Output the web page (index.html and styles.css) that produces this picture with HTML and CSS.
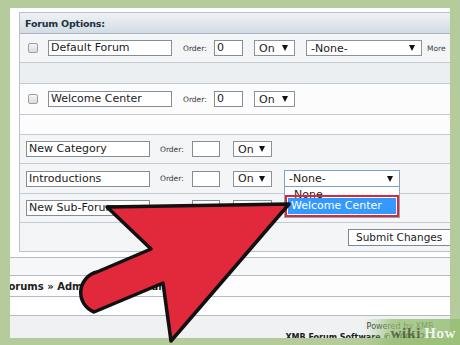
FILE: index.html
```html
<!DOCTYPE html>
<html>
<head>
<meta charset="utf-8">
<link rel="stylesheet" href="styles.css">
</head>
<body>
<div class="page">
  <div class="panel">
    <div class="tbl">
      <div class="hdr">Forum Options:</div>
      <div class="row r1 alt">
        <span class="cb"></span>
        <span class="inp name">Default Forum</span>
        <span class="lbl">Order:</span>
        <span class="inp ord">0</span>
        <span class="sel on">On<i class="tri"></i></span>
        <span class="sel none">-None-<i class="tri"></i></span>
        <span class="more">More</span>
      </div>
      <div class="row r2 grey"></div>
      <div class="row r3">
        <span class="cb"></span>
        <span class="inp name">Welcome Center</span>
        <span class="lbl">Order:</span>
        <span class="inp ord">0</span>
        <span class="sel on">On<i class="tri"></i></span>
      </div>
      <div class="row r4"></div>
      <div class="row r5 alt new">
        <span class="inp name">New Category</span>
        <span class="lbl">Order:</span>
        <span class="inp ord"></span>
        <span class="sel on">On<i class="tri"></i></span>
      </div>
      <div class="row r6 alt new">
        <span class="inp name">Introductions</span>
        <span class="lbl">Order:</span>
        <span class="inp ord"></span>
        <span class="sel on">On<i class="tri"></i></span>
        <span class="dropwrap">
          <span class="sel none focus">-None-<i class="tri"></i></span>
          <span class="droplist">
            <span class="opt">-None-</span>
            <span class="opt hi">Welcome Center</span>
          </span>
        </span>
      </div>
      <div class="row r7 alt new">
        <span class="inp name">New Sub-Forum</span>
        <span class="lbl">Order:</span>
        <span class="inp ord"></span>
        <span class="sel on">On<i class="tri"></i></span>
      </div>
      <div class="row r8 alt">
        <span class="btn">Submit Changes</span>
      </div>
    </div>
    <div class="band b1"></div>
    <div class="band nav"><span class="navtext">Forums » Administration Panel</span></div>
    <div class="band b3"></div>
    <div class="footer">
      <span class="pw">Powered by XMB</span>
      <span class="sw">XMB Forum Software © 2001-2011 The XMB Group</span>
    </div>
  </div>
  <div class="wm"><span class="wiki">wiki</span><span class="how">How</span></div>
  <svg class="arrow" width="460" height="345" viewBox="0 0 460 345">
    <path d="M289 204 L171 341 L163 283 L94 312 A21 21 0 0 1 97 272 L151 249 L107 207 Z" fill="#e2283b" stroke="#111" stroke-width="3.5" stroke-linejoin="round"/>
  </svg>
</div>
</body>
</html>
```
FILE: styles.css
```css
* { box-sizing: border-box; }
html, body { margin: 0; padding: 0; }
body { background: #b6cb9c; font-family: "DejaVu Sans", Verdana, sans-serif; color: #1a1a1a; }
.page { position: relative; width: 460px; height: 345px; overflow: hidden; padding: 8px 10px 0; }
.panel { width: 440px; height: 330px; background: #fff; overflow: hidden; }
.tbl { margin: 4px 0 0 9px; width: 440px; border: 1px solid #b9c1ca; border-right: none; }
.hdr { height: 21px; border-bottom: 1px solid #a9b4bf; background: linear-gradient(#eef2f5, #d3dce4); font-weight: bold; font-size: 9.5px; color: #23303d; padding-left: 5px; display: flex; align-items: center; letter-spacing: -0.2px; }
.row { display: flex; align-items: center; border-bottom: 1px solid #c3cad2; background: #fcfcfd; padding-left: 8px; }
.row.alt { background: #f3f5f7; }
.row.grey { background: #eceff2; }
.r1 { height: 29px; }
.r2 { height: 21px; }
.r3 { height: 31px; }
.r4 { height: 20px; }
.r5 { height: 29px; }
.r6 { height: 30px; }
.r7 { height: 29px; }
.r8 { height: 28px; border-bottom: none; justify-content: flex-end; }
.cb { width: 10px; height: 10px; border: 1px solid #9aa0a6; border-radius: 2px; background: linear-gradient(#f4f4f4, #dcdcdc); margin-right: 10px; }
.inp { height: 16px; border: 1px solid #858d95; background: #fff; font-size: 11px; line-height: 14px; padding-left: 2px; white-space: nowrap; overflow: hidden; }
.inp.name { width: 124px; }
.inp.ord { width: 29px; }
.lbl { font-size: 7.5px; color: #333; margin-left: 11px; width: 31px; }
.sel { height: 16px; border: 1px solid #8a929a; background: #fff; font-size: 11px; display: flex; align-items: center; justify-content: space-between; padding: 0 6px 0 4px; margin-left: 11px; }
.sel.on { width: 41px; }
.sel.none { width: 116px; }
.tri { width: 0; height: 0; border-left: 3px solid transparent; border-right: 3px solid transparent; border-top: 6px solid #111; }
.more { font-size: 7.5px; color: #444; margin-left: 5px; }
.new { padding-left: 6px; }
.new .lbl { margin-left: 10px; width: 32px; }
.new .inp.ord { width: 28px; }
.new .sel.on { margin-left: 13px; width: 39px; }
.dropwrap { position: relative; margin-left: 12px; }
.dropwrap .sel.none { margin-left: 0; height: 17px; border-color: #7b9fcf; }
.droplist { position: absolute; left: 0; top: 17px; width: 116px; background: #fff; border: 1px solid #8ea4bf; border-top: none; display: flex; flex-direction: column; padding: 0 2px 3px; }
.opt { font-size: 11px; white-space: nowrap; padding-left: 3px; }
.opt:first-child { height: 11px; line-height: 15px; color: #222; }
.opt.hi { position: relative; height: 16px; line-height: 16px; background: #3399ff; color: #fff; margin: 0 1px; outline: 2px solid #d42a3c; outline-offset: 1px; }
.btn { height: 17px; border: 1px solid #80878f; background: #fff; font-size: 10.5px; padding: 0 7px; display: flex; align-items: center; white-space: nowrap; width: 104px; margin-right: 7px; }
.band { border-top: 1px solid #b3bac2; }
.b1 { margin-top: 5px; height: 18px; background: #f6f7f8; }
.nav { height: 21px; background: #fdfdfd; display: flex; align-items: center; }
.navtext { font-weight: bold; font-size: 10px; color: #1e1e1e; margin-left: -8px; white-space: nowrap; }
.b3 { height: 19px; background: #fff; }
.footer { border-top: 1px solid #b3bac2; height: 30px; background: #eff1f3; display: flex; flex-direction: column; align-items: center; padding-left: 340px; padding-top: 5px; }
.pw { font-size: 8px; color: #333; white-space: nowrap; line-height: 11px; }
.sw { font-size: 8px; color: #222; font-weight: bold; white-space: nowrap; line-height: 11px; }
.wm { position: absolute; right: 0; bottom: 0; width: 96px; height: 26px; background: linear-gradient(90deg, rgba(150,190,115,0) 0%, rgba(150,190,115,0.75) 30%, rgba(150,190,115,0.85) 100%); display: flex; align-items: flex-end; justify-content: flex-end; padding: 0 4px 4px 0; font-family: "Liberation Serif", serif; font-weight: bold; font-size: 15px; line-height: 15px; }
.wiki { color: rgba(70,85,60,0.8); letter-spacing: 0.8px; }
.how { color: rgba(255,255,255,0.88); margin-left: 3px; letter-spacing: 0.6px; }
.arrow { position: absolute; left: 0; top: 0; }
```
